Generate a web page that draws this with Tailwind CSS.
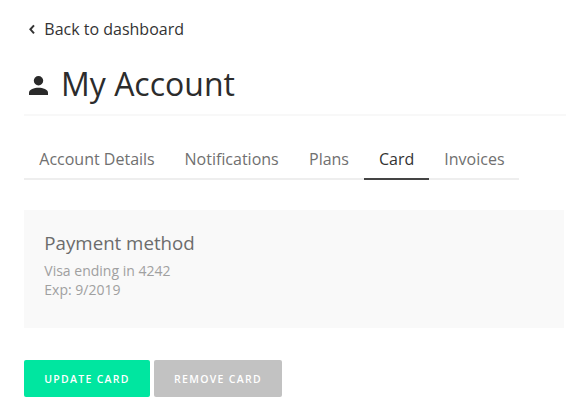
<!DOCTYPE html>
<html lang="en"><head><meta charset="utf-8"><title>My Account</title>
<script src="https://cdn.jsdelivr.net/npm/@tailwindcss/browser@4"></script></head>
<body class="bg-white font-['Open_Sans',sans-serif] w-[588px] h-[420px] overflow-hidden pl-6 text-[#333]">
<a class="flex items-center h-6 mt-[17px] pl-1 text-[16px] leading-6"><svg class="w-2 h-3 mr-[8.300px]" viewBox="0 0 8 12" fill="none" stroke="#333" stroke-width="2"><path d="M6 2.300 2.400 6.300 6 10.300"/></svg>Back to dashboard</a>
<header class="flex items-center w-[542px] h-[75px] pt-[13px] border-b-2 border-[#f8f8f8]">
<svg class="w-[19px] h-[19px] ml-[5px] mr-[13px] mt-[3px]" viewBox="0 0 19 19" fill="#2a2a2a"><circle cx="9.500" cy="4.800" r="4.700"/><path d="M0 19v-2.300C0 13.500 5.200 11.800 9.500 11.800s9.500 1.700 9.500 4.900V19z"/></svg>
<h1 class="text-[32px] leading-10 text-[#2c2c2c]">My Account</h1></header>
<nav class="flex w-[495px] h-[40px] mt-[24px] border-b-2 border-[#eeeeee] text-[16px] leading-[38px] text-[#707070]">
<a class="pl-[15.300px] w-[145px]">Account Details</a><a class="pl-[15.500px] w-[125px]">Notifications</a><a class="pl-[15px] w-[70px]">Plans</a><a class="pl-[15px] w-[65px] h-10 border-b-2 border-[#444] text-[#333]">Card</a><a class="pl-[15.300px]">Invoices</a></nav>
<section class="w-[540px] h-[118px] mt-[30px] bg-[#f9f9f9] pl-[20.300px] pt-[19px]">
<h2 class="text-[18.720px] leading-[27px] text-[#6c6c6c]">Payment method</h2><p class="text-[14px] leading-[19px] mt-[5px] text-[#a0a0a0]">Visa ending in 4242<br>Exp: 9/2019</p></section>
<div class="flex gap-1 mt-8 text-[10.500px] font-semibold tracking-[1.300px] text-white">
<button class="w-[126px] h-[37px] pt-[3px] rounded-[2px] bg-[#00e6a0]">UPDATE CARD</button><button class="w-[128px] h-[37px] pt-[3px] rounded-[2px] bg-[#c2c2c2]">REMOVE CARD</button></div>
</body></html>
